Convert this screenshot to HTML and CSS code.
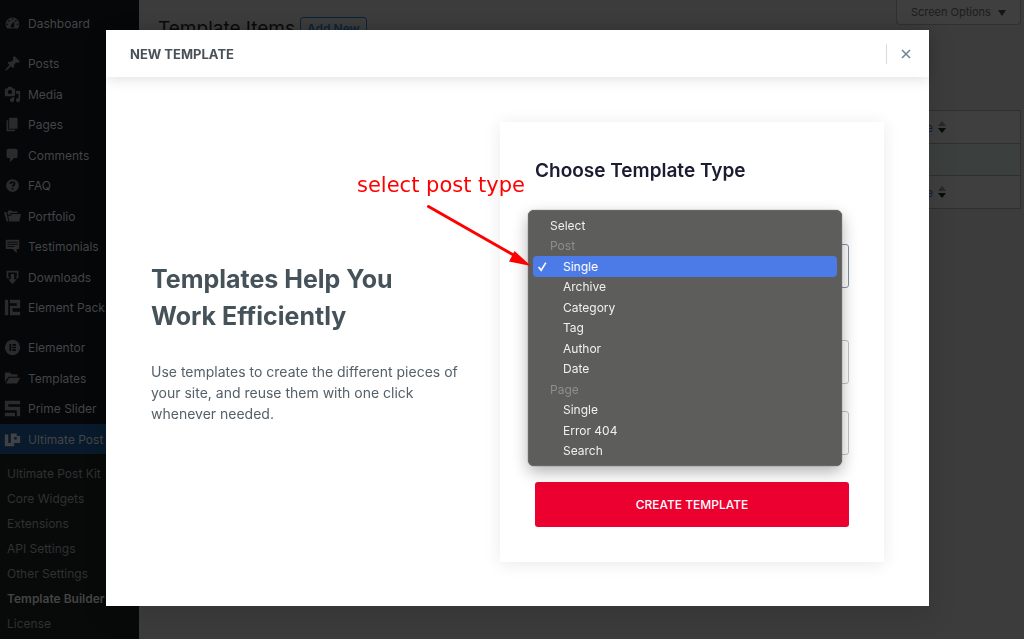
FILE: index.html
```html
<!DOCTYPE html>
<html lang="en">
<head>
<meta charset="utf-8">
<title>Template Items</title>
<link rel="stylesheet" href="styles.css">
</head>
<body>
<div class="admin">
  <nav class="sidebar">
    <ul class="menu">
      <li><a href="#"><svg viewBox="0 0 20 20"><path fill-rule="evenodd" d="M3.76 16h12.48c1.1-1.37 1.76-3.11 1.76-5 0-4.42-3.58-8-8-8s-8 3.58-8 8c0 1.89.66 3.63 1.76 5zM10 4c.55 0 1 .45 1 1s-.45 1-1 1-1-.45-1-1 .45-1 1-1zM6 6c.55 0 1 .45 1 1s-.45 1-1 1-1-.45-1-1 .45-1 1-1zm8 0c.55 0 1 .45 1 1s-.45 1-1 1-1-.45-1-1 .45-1 1-1zm-5.37 5.55L12 7v6c0 1.1-.9 2-2 2s-2-.9-2-2c0-.57.24-1.08.63-1.45zM4 10c.55 0 1 .45 1 1s-.45 1-1 1-1-.45-1-1 .45-1 1-1zm12 0c.55 0 1 .45 1 1s-.45 1-1 1-1-.45-1-1 .45-1 1-1z"/></svg>Dashboard</a></li>
    </ul>
    <ul class="menu">
      <li><a href="#"><svg viewBox="0 0 20 20"><path d="M10.44 3.02l1.82-1.82 6.36 6.35-1.83 1.82c-1.05-.68-2.48-.57-3.41.36l-.75.75c-.92.93-1.04 2.35-.35 3.41l-1.83 1.82-2.41-2.41-2.8 2.79c-.42.42-3.38 2.71-3.8 2.29s1.86-3.39 2.28-3.81l2.79-2.79L4.1 9.36l1.83-1.82c1.05.69 2.48.57 3.4-.36l.75-.75c.93-.92 1.05-2.35.36-3.41z"/></svg>Posts</a></li>
      <li><a href="#"><svg viewBox="0 0 20 20"><path fill-rule="evenodd" d="M13 11V4c0-.55-.45-1-1-1h-1.67L9 1H5L3.67 3H2c-.55 0-1 .45-1 1v7c0 .55.45 1 1 1h10c.55 0 1-.45 1-1zM7 4.5c1.38 0 2.5 1.12 2.5 2.5S8.38 9.5 7 9.5 4.5 8.38 4.5 7 5.62 4.5 7 4.5zM14 6h5v10.5c0 1.38-1.12 2.5-2.5 2.5S14 17.88 14 16.5s1.12-2.5 2.5-2.5c.17 0 .34.02.5.05V9h-3V6zm-4 8.05V13h2v3.5c0 1.38-1.12 2.5-2.5 2.5S7 17.88 7 16.5 8.12 14 9.5 14c.17 0 .34.02.5.05z"/></svg>Media</a></li>
      <li><a href="#"><svg viewBox="0 0 20 20"><path d="M6 15V2h10v13H6zm-1 1h8v2H3V5h2v11z"/></svg>Pages</a></li>
      <li><a href="#"><svg viewBox="0 0 20 20"><path d="M5 2h9q.82 0 1.41.59T16 4v7q0 .82-.59 1.41T14 13h-2l-5 5v-5H5q-.82 0-1.41-.59T3 11V4q0-.82.59-1.41T5 2z"/></svg>Comments</a></li>
      <li><a href="#"><svg viewBox="0 0 20 20"><circle cx="10" cy="10" r="7.500"/><path class="cut" d="M7.5 8.2c0-3 5-3 5-.2 0 1.700-2.500 1.700-2.500 3.500M10 13v1.800"/></svg>FAQ</a></li>
      <li><a href="#"><svg viewBox="0 0 20 20"><path d="M0 5h3l2 11H3zM4 5l1-2h4l1 1h6v2H8L7 8H5zM5 9h3l1-2h11l-2 9H6z"/></svg>Portfolio</a></li>
      <li><a href="#"><svg viewBox="0 0 20 20"><path d="M3 2h14q1 0 1 1v9q0 1-1 1h-2v5l-5-5H3q-1 0-1-1V3q0-1 1-1z"/><path class="cut thin" d="M4 5h12M4 7.500h12M4 10h8"/></svg>Testimonials</a></li>
      <li><a href="#"><svg viewBox="0 0 20 20"><path d="M3 2h14v9h-3V9h1V4H5v5h1v2H3z"/><path d="M8 6h4v6h3l-5 6-5-6h3z"/></svg>Downloads</a></li>
      <li><a href="#"><svg viewBox="0 0 20 20"><path d="M1 1h4v18H1zM7 1h12v10H10v4h9v4H7V8h8V5H7z"/></svg>Element Pack</a></li>
    </ul>
    <ul class="menu">
      <li><a href="#"><svg viewBox="0 0 20 20"><circle cx="10" cy="10" r="9"/><path class="cut" d="M7.500 6v8M10 7h4M10 10h4M10 13h4"/></svg>Elementor</a></li>
      <li><a href="#"><svg viewBox="0 0 20 20"><path d="M1 14V4q0-1 1-1h5l2 2h6q1 0 1 1v2H6q-1 0-1.500 1zM2 16l4-7h13l-3 6q-.5 1-1.500 1z"/></svg>Templates</a></li>
      <li><a href="#"><svg viewBox="0 0 20 20"><path d="M1 1h18v4H5v3h14v11h-4v-7H1zM1 15h12v4H1z"/></svg>Prime Slider</a></li>
      <li><a href="#" class="current"><svg viewBox="0 0 20 20"><path fill-rule="evenodd" d="M1 4h4v10h3V3h7v3h4v8h-7v4H1zM12 7v3h3V7z"/></svg>Ultimate Post Kit</a></li>
    </ul>
    <ul class="submenu">
      <li><a href="#">Ultimate Post Kit</a></li>
      <li><a href="#">Core Widgets</a></li>
      <li><a href="#">Extensions</a></li>
      <li><a href="#">API Settings</a></li>
      <li><a href="#">Other Settings</a></li>
      <li><a href="#" class="active">Template Builder</a></li>
      <li><a href="#">License</a></li>
    </ul>
  </nav>
  <main class="content">
    <div class="topbar">
      <div class="title-row"><h1>Template Items</h1><a class="add-new" href="#">Add New</a></div>
      <button class="screen-options" type="button">Screen Options <span class="caret"></span></button>
    </div>
    <table class="items">
      <thead><tr><th><a href="#">Date <svg viewBox="0 0 8 12"><path class="up" d="M4 0l4 5H0z"/><path d="M4 12l4-5H0z"/></svg></a></th></tr></thead>
      <tbody><tr><td></td></tr></tbody>
      <tfoot><tr><th><a href="#">Date <svg viewBox="0 0 8 12"><path class="up" d="M4 0l4 5H0z"/><path d="M4 12l4-5H0z"/></svg></a></th></tr></tfoot>
    </table>
  </main>
</div>

<div class="overlay">
  <section class="modal" role="dialog" aria-labelledby="modal-title">
    <header class="modal-header">
      <h2 id="modal-title">NEW TEMPLATE</h2>
      <button class="close" type="button" aria-label="Close"><svg viewBox="0 0 10 10"><path d="M1 1l8 8M9 1l-8 8"/></svg></button>
    </header>
    <div class="modal-body">
      <div class="intro">
        <h3>Templates Help You Work Efficiently</h3>
        <p>Use templates to create the different pieces of your site, and reuse them with one click whenever needed.</p>
      </div>
      <form class="card">
        <h3>Choose Template Type</h3>
        <div class="type-field">
          <select class="field focused" aria-label="Template type"></select>
          <ul class="options" role="listbox" aria-label="Template type">
            <li role="option">Select</li>
            <li class="group">Post</li>
            <li role="option" class="sub selected" aria-selected="true"><svg viewBox="0 0 10 10"><path d="M1.500 5.500l2.300 3L8 1.500"/></svg>Single</li>
            <li role="option" class="sub">Archive</li>
            <li role="option" class="sub">Category</li>
            <li role="option" class="sub">Tag</li>
            <li role="option" class="sub">Author</li>
            <li role="option" class="sub">Date</li>
            <li class="group">Page</li>
            <li role="option" class="sub">Single</li>
            <li role="option" class="sub">Error 404</li>
            <li role="option" class="sub">Search</li>
          </ul>
          <div class="note">
            <span>select post type</span>
            <svg viewBox="0 0 104 62"><path class="shaft" d="M1.500 2.500L90 53"/><path d="M104 62L82 57.500L87.500 47z"/></svg>
          </div>
        </div>
        <select class="field" aria-label="Status"></select>
        <input class="field" type="text" aria-label="Template name">
        <button class="create" type="button">CREATE TEMPLATE</button>
      </form>
    </div>
  </section>
</div>
</body>
</html>
```
FILE: styles.css
```css
* { box-sizing: border-box; }
body {
  margin: 0;
  min-height: 100vh;
  overflow: hidden;
  background: #3c3c3c;
  font-family: Inter, "Liberation Sans", sans-serif;
}
h1, h2, h3, p, ul { margin: 0; padding: 0; }
ul { list-style: none; }
a { color: inherit; text-decoration: none; }
button { font-family: inherit; }

.admin { display: flex; min-height: 100vh; }
.sidebar {
  flex: 0 0 139px;
  height: 100vh;
  overflow: hidden;
  padding-top: 8px;
  background: #060709;
  color: #444546;
  font-size: 12px;
}
.menu { margin-bottom: 10px; }
.menu li:nth-child(even) { margin-top: 1px; }
.menu a {
  display: flex;
  align-items: center;
  gap: 7px;
  height: 30px;
  padding-left: 4px;
  white-space: nowrap;
}
.menu svg { flex: none; width: 17px; height: 17px; fill: #292b2c; }
.menu .cut { fill: none; stroke: #060709; stroke-width: 2; }
.menu .thin { stroke-width: 1; }
.menu:nth-of-type(3) { margin-bottom: 0; }
.menu .current { background: #081a2b; }
.menu .current svg { fill: #404244; }
.submenu {
  height: 100%;
  padding-top: 7px;
  background: #080a0a;
  color: #2f3132;
  font-size: 12px;
}
.submenu a { display: block; padding-left: 7px; line-height: 25px; }
.submenu .active { color: #444; font-weight: 600; }

.content { flex: 1; padding: 0 3px 0 19px; }
.topbar { display: flex; justify-content: space-between; align-items: flex-start; height: 110px; }
.title-row { display: flex; gap: 5px; padding-top: 17px; }
.title-row h1 { color: #090a0a; font-size: 19px; font-weight: 400; line-height: 24px; }
.add-new {
  height: 24px;
  padding: 0 6px;
  border: 1px solid #0b2339;
  border-radius: 3px;
  color: #0b2339;
  font-size: 12px;
  font-weight: 600;
  line-height: 22px;
}
.screen-options {
  height: 25px;
  padding: 0 14px;
  border: 1px solid #303030;
  border-top: 0;
  border-radius: 0 0 4px 4px;
  background: #3f3f3f;
  color: #1b1d1e;
  font-size: 11px;
}
.caret {
  display: inline-block;
  margin-left: 4px;
  border: 4px solid transparent;
  border-top: 6px solid #141515;
  border-bottom: 0;
}
.items { width: 100%; border: 1px solid #2f2f2f; border-spacing: 0; background: #3f3f3f; }
.items th { height: 32px; padding: 0 74px 0 0; color: #0b2339; font-size: 12px; font-weight: 400; text-align: right; }
.items td { height: 33px; border: solid #2f2f2f; border-width: 1px 0; background: #3b3f3e; }
.items a { display: flex; align-items: center; justify-content: flex-end; gap: 5px; }
.items svg { width: 8px; height: 12px; fill: #090a0a; }
.items .up { fill: #292929; }

.overlay { position: fixed; inset: 0; display: flex; align-items: flex-start; padding: 30px 95px 32px 106px; }
.modal { flex: 1; background: #fff; box-shadow: 2px 8px 23px 3px rgba(0, 0, 0, .1); }
.modal-header {
  display: flex;
  align-items: center;
  justify-content: space-between;
  height: 47px;
  padding: 0 12px 0 24px;
  box-shadow: 0 0 16px rgba(0, 0, 0, .16);
}
.modal-header h2 { color: #495157; font-size: 13px; font-weight: 700; }
.close {
  display: flex;
  align-items: center;
  justify-content: flex-end;
  width: 31px;
  height: 20px;
  padding: 0 6px;
  border: 0;
  border-left: 1px solid #d8dce0;
  background: none;
}
.close svg { width: 10px; height: 10px; fill: none; stroke: #75849b; stroke-width: 1.6; }
.modal-body {
  display: grid;
  grid-template-columns: 1fr 384px;
  gap: 40px;
  align-items: center;
  padding: 45px 45px 44px;
}
.intro { color: #556068; }
.intro h3 { margin-bottom: 26px; color: #46525a; font-size: 25px; font-weight: 700; line-height: 37px; }
.intro p { font-size: 14px; line-height: 21px; }
.card {
  display: flex;
  flex-direction: column;
  padding: 36px 35px 35px;
  background: #fff;
  box-shadow: 0 2px 16px rgba(0, 0, 0, .09);
}
.card > h3 { margin-bottom: 60px; color: #1b1c31; font-size: 19px; font-weight: 600; line-height: 26px; }
.field {
  display: block;
  width: 100%;
  height: 44px;
  margin-bottom: 27px;
  border: 1px solid #c4c4c4;
  border-radius: 3px;
  background: #fff;
  appearance: none;
}
.type-field { position: relative; margin-bottom: 52px; }
.type-field .field { margin: 0; }
.focused { border-color: #8590a5; }
.create {
  height: 45px;
  border: 0;
  border-radius: 3px;
  background: #eb002f;
  color: #fff;
  font-size: 12px;
  font-weight: 500;
}
.options {
  position: absolute;
  top: -34px;
  left: -7px;
  right: 7px;
  padding: 4px;
  border: 1px solid #666766;
  border-radius: 6px;
  background: #5d5d5b;
  box-shadow: 0 6px 16px rgba(0, 0, 0, .3), 0 0 1px #222;
  color: #f0f0f0;
  font-size: 12px;
}
.options li { height: 20px; padding-left: 17px; line-height: 20px; }
.options li:nth-child(odd) { height: 21px; line-height: 21px; }
.options .group { color: #8e8e8d; }
.options .sub { padding-left: 30px; }
.options .selected { position: relative; border-radius: 4px; background: #4c7ae6; color: #fff; }
.selected svg { position: absolute; left: 4px; top: 5px; width: 11px; height: 11px; fill: none; stroke: #fff; stroke-width: 1.5; }
.note { position: absolute; top: -72px; left: -178px; color: #f00; white-space: nowrap; }
.note span { display: block; font: 21px/26px "DejaVu Sans", sans-serif; }
.note svg { display: block; width: 104px; height: 62px; margin: 6px 0 0 70px; fill: #f00; }
.note .shaft { fill: none; stroke: #f00; stroke-width: 3; stroke-linecap: round; }
```
